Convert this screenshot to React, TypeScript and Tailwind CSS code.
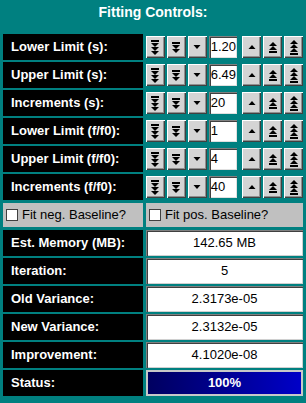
import React from "react";

type Dir = "down" | "up";

// speed 1..3 -> number of stacked triangles, with a bar on the far side for 2 and 3
function Arrow({ dir, speed }: { dir: Dir; speed: number }) {
  const tris = [];
  const bar = speed > 1;
  const h = speed === 1 ? 4 : speed * 4 + 3;
  let y = 0;
  const parts: React.ReactNode[] = [];
  if (bar) {
    parts.push(<rect key="b" x={0} y={0} width={8} height={2} />);
    y = 3;
  }
  for (let i = 0; i < speed; i++) {
    const w = speed === 1 ? 7 : 8;
    const x0 = speed === 1 ? 0.5 : 0;
    parts.push(
      <polygon
        key={i}
        points={`${x0},${y} ${x0 + w},${y} ${x0 + w / 2},${y + 4}`}
      />,
    );
    y += 4;
  }
  tris.push(...parts);
  return (
    <svg
      width={8}
      height={h}
      viewBox={`0 0 8 ${h}`}
      fill="#000"
      style={dir === "up" ? { transform: "scaleY(-1)" } : undefined}
    >
      {tris}
    </svg>
  );
}

function Btn({ dir, speed }: { dir: Dir; speed: number }) {
  return (
    <div className="flex h-[22px] w-[20px] items-center justify-center bg-[#d4d4d4] shadow-[inset_1px_1px_#ffffff,inset_-1px_-1px_#404040,inset_-2px_-2px_#909090]">
      <Arrow dir={dir} speed={speed} />
    </div>
  );
}

function Label({ text }: { text: string }) {
  return (
    <div className="flex h-[26px] items-center bg-black pl-[8px] text-[13px] font-bold text-white">
      {text}
    </div>
  );
}

function Spinner({ value }: { value: string }) {
  return (
    <div className="flex h-[26px] items-center gap-[2px]">
      <Btn dir="down" speed={3} />
      <Btn dir="down" speed={2} />
      <Btn dir="down" speed={1} />
      <div className="flex h-[22px] w-[30px] items-center bg-white pl-[2px] text-[13px] text-black shadow-[inset_1px_1px_#808080,inset_2px_2px_#404040,inset_-1px_-1px_#e0e0e0]">
        {value}
      </div>
      <div className="w-[1px]" />
      <Btn dir="up" speed={1} />
      <Btn dir="up" speed={2} />
      <Btn dir="up" speed={3} />
    </div>
  );
}

function Value({ value }: { value: string }) {
  return (
    <div className="flex h-[26px] items-center justify-center bg-white text-[13px] text-black shadow-[inset_1px_1px_#808080,inset_2px_2px_#404040,inset_-1px_-1px_#d0d0d0]">
      {value}
    </div>
  );
}

function Check({ text }: { text: string }) {
  return (
    <div className="flex h-[24px] items-center gap-[4px] bg-[#c0c0c0] pl-[3px] text-[13px] text-black">
      <div className="h-[12px] w-[12px] border border-[#404040] bg-white" />
      {text}
    </div>
  );
}

const spinners = [
  ["Lower Limit (s):", "1.20"],
  ["Upper Limit (s):", "6.49"],
  ["Increments (s):", "20"],
  ["Lower Limit (f/f0):", "1"],
  ["Upper Limit (f/f0):", "4"],
  ["Increments (f/f0):", "40"],
];

const values = [
  ["Est. Memory (MB):", "142.65 MB"],
  ["Iteration:", "5"],
  ["Old Variance:", "2.3173e-05"],
  ["New Variance:", "2.3132e-05"],
  ["Improvement:", "4.1020e-08"],
];

export default function App() {
  return (
    <div
      className="h-[403px] w-[306px] overflow-hidden bg-[#008080] px-[3px]"
      style={{ fontFamily: '"Liberation Sans", Arial, sans-serif' }}
    >
      <div className="flex h-[25px] items-center justify-center text-[14px] font-bold text-white">
        Fitting Controls:
      </div>
      <div className="mt-[9px] grid grid-cols-[140px_157px] gap-x-[3px] gap-y-[2px]">
        {spinners.map(([l, v]) => (
          <React.Fragment key={l}>
            <Label text={l} />
            <Spinner value={v} />
          </React.Fragment>
        ))}
        <div className="col-span-2 grid grid-cols-[140px_157px] gap-x-[3px] py-[1px]">
          <Check text="Fit neg. Baseline?" />
          <Check text="Fit pos. Baseline?" />
        </div>
        {values.map(([l, v]) => (
          <React.Fragment key={l}>
            <Label text={l} />
            <Value value={v} />
          </React.Fragment>
        ))}
        <Label text="Status:" />
        <div className="flex h-[26px] items-center justify-center border-2 border-[#c8c8c8] bg-gradient-to-r from-[#000060] to-[#0000c8] text-[13px] font-bold text-white">
          100%
        </div>
      </div>
    </div>
  );
}
